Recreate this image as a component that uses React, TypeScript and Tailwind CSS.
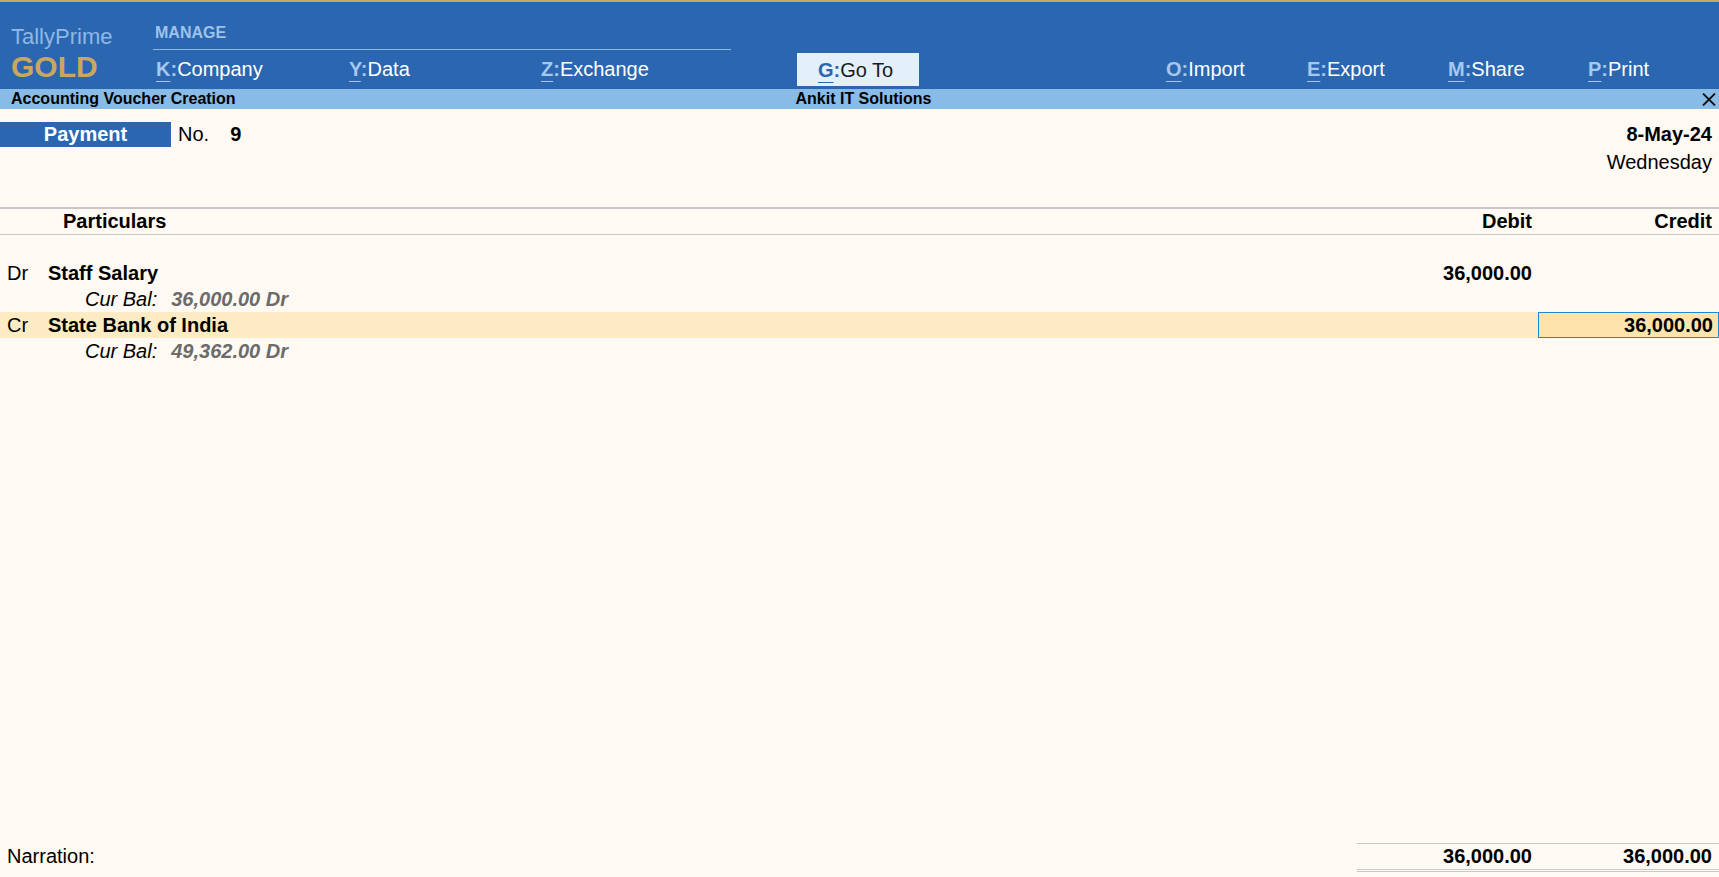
import React from "react";

const NavItem = ({ k, label, w }: { k: string; label: string; w: string }) => (
  <div className={`${w} shrink-0 whitespace-nowrap`}>
    <span className="font-bold text-[#a6c8ee] underline decoration-[#a6c8ee] decoration-1 underline-offset-[5px]">{k}</span>
    <span className="font-bold text-[#a6c8ee]">:</span>
    <span className="text-white">{label}</span>
  </div>
);

const Amount = ({ children, className = "" }: { children?: React.ReactNode; className?: string }) => (
  <div className={`w-[181px] shrink-0 text-right font-bold ${className}`}>{children}</div>
);

export default function App() {
  return (
    <div className="h-screen w-full overflow-hidden flex flex-col font-['Liberation_Sans',Arial,sans-serif] text-black bg-[#fef9f2]">
      {/* Top bar */}
      <div className="h-[89px] shrink-0 bg-[#2a67b0] border-t-2 border-[#c9a762] flex">
        <div className="w-[153px] shrink-0 pl-[11px] flex flex-col">
          <div className="mt-[23px] text-[22px] leading-[24px] text-[#8fb8e6]">TallyPrime</div>
          <div className="mt-[2px] text-[30px] leading-[32px] font-bold text-[#c9a85e]">GOLD</div>
        </div>
        <div className="w-[578px] shrink-0 flex flex-col">
          <div className="mt-[22px] pl-[2px] text-[16px] leading-[18px] font-bold text-[#9ec2ea]">MANAGE</div>
          <div className="mt-[7px] h-px bg-[#8cb8e6]" />
          <div className="mt-[7px] flex pl-[3px] text-[20px] leading-[24px]">
            <NavItem k="K" label="Company" w="w-[193px]" />
            <NavItem k="Y" label="Data" w="w-[192px]" />
            <NavItem k="Z" label="Exchange" w="w-[180px]" />
          </div>
        </div>
        <div className="ml-[66px] mt-[51px] h-[33px] w-[122px] shrink-0 bg-[#e3effb] flex items-center pl-[21px] text-[20px] leading-[24px] whitespace-nowrap">
          <span className="font-bold text-[#2a67b0] underline decoration-[#2a67b0] decoration-1 underline-offset-[5px]">G</span>
          <span className="font-bold text-[#2a67b0]">:</span>
          <span className="text-[#1a1a1a]">Go To</span>
        </div>
        <div className="ml-[247px] mt-[55px] flex text-[20px] leading-[24px]">
          <NavItem k="O" label="Import" w="w-[141px]" />
          <NavItem k="E" label="Export" w="w-[141px]" />
          <NavItem k="M" label="Share" w="w-[140px]" />
          <NavItem k="P" label="Print" w="w-[120px]" />
        </div>
      </div>

      {/* Title strip */}
      <div className="h-[20px] shrink-0 bg-[#88bbe6] flex items-center text-[16px] leading-[20px] font-bold">
        <div className="flex-1 pl-[11px] whitespace-nowrap">Accounting Voucher Creation</div>
        <div className="whitespace-nowrap">Ankit IT Solutions</div>
        <div className="flex-1 flex justify-end pr-[3px]">
          <svg width="14" height="13" viewBox="0 0 14 13" className="block">
            <path d="M1 0.5 L13 12.5 M13 0.5 L1 12.5" stroke="#111" strokeWidth="1.8" fill="none" />
          </svg>
        </div>
      </div>

      {/* Body */}
      <div className="flex-1 flex flex-col text-[20px]">
        <div className="h-[98px] shrink-0 pt-[13px] flex justify-between">
          <div className="flex items-start leading-[25px]">
            <div className="w-[171px] h-[25px] bg-[#2a67b0] text-white font-bold text-center">Payment</div>
            <div className="ml-[7px]">No.</div>
            <div className="ml-[21px] font-bold">9</div>
          </div>
          <div className="pr-[7px] text-right leading-[25px]">
            <div className="font-bold">8-May-24</div>
            <div className="mt-[3px]">Wednesday</div>
          </div>
        </div>

        <div className="h-[28px] shrink-0 border-t-2 border-b border-[#c8c8c8] flex items-center leading-[25px] font-bold">
          <div className="flex-1 pl-[63px]">Particulars</div>
          <Amount className="pr-[6px]">Debit</Amount>
          <Amount className="pr-[7px]">Credit</Amount>
        </div>

        <div className="mt-[25px] flex flex-col leading-[26px]">
          <div className="h-[26px] flex">
            <div className="w-[48px] shrink-0 pl-[7px]">Dr</div>
            <div className="flex-1 font-bold">Staff Salary</div>
            <Amount className="pr-[6px]">36,000.00</Amount>
            <Amount />
          </div>
          <div className="h-[26px] flex pl-[85px] italic">
            <span>Cur Bal:</span>
            <span className="ml-[14px] font-bold text-[#6b6b6b]">36,000.00 Dr</span>
          </div>
          <div className="h-[26px] flex bg-[#fdebc3]">
            <div className="w-[48px] shrink-0 pl-[7px]">Cr</div>
            <div className="flex-1 font-bold">State Bank of India</div>
            <Amount className="pr-[6px]" />
            <div className="w-[181px] shrink-0 h-[26px] border border-[#1a8ad2] bg-[#fde4ad] text-right font-bold pr-[5px] leading-[24px]">36,000.00</div>
          </div>
          <div className="h-[26px] flex pl-[85px] italic">
            <span>Cur Bal:</span>
            <span className="ml-[14px] font-bold text-[#6b6b6b]">49,362.00 Dr</span>
          </div>
        </div>

        <div className="flex-1" />

        <div className="mb-[5px] flex items-stretch leading-[25px]">
          <div className="flex-1 pl-[7px] pt-[1px]">Narration:</div>
          <div className="flex border-t border-b-[3px] border-double border-[#c8c8c8]">
            <Amount className="pr-[6px]">36,000.00</Amount>
            <Amount className="pr-[7px]">36,000.00</Amount>
          </div>
        </div>
      </div>
    </div>
  );
}
